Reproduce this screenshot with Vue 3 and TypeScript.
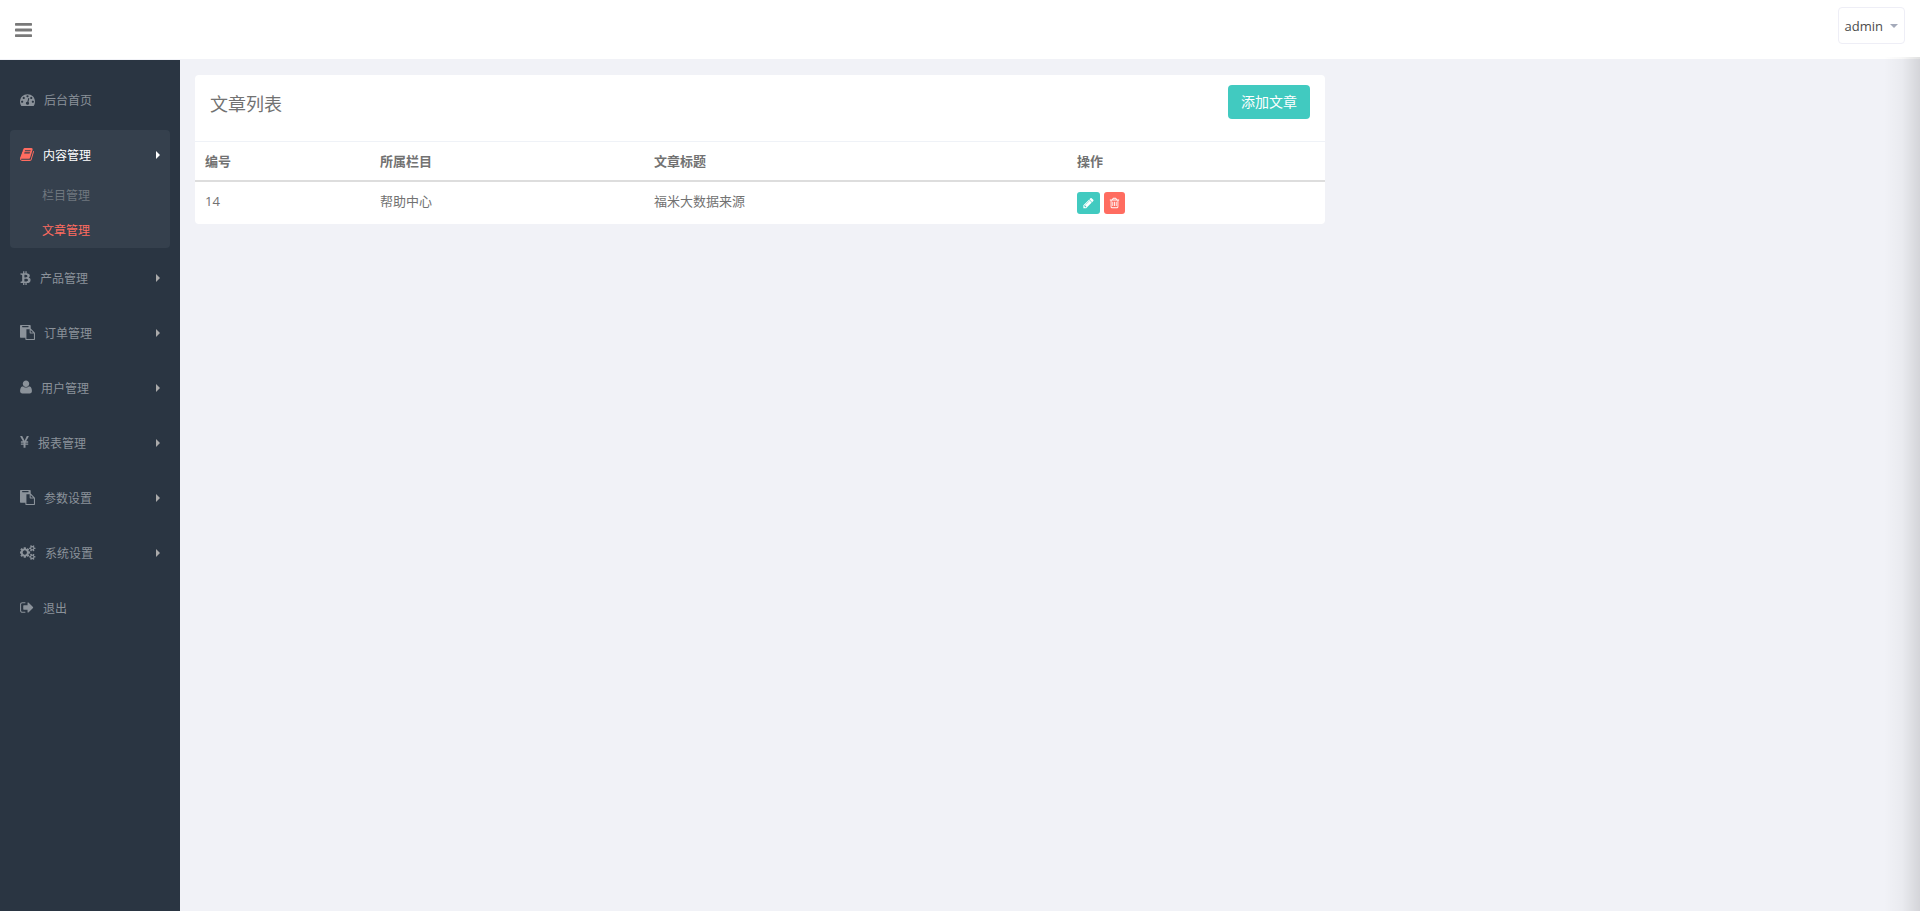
<script setup lang="ts">
import { ref } from 'vue'

interface Icon { box: string; w: number; d: string }
interface MenuItem { label: string; icon: string; children?: string[]; arrow?: boolean }
interface Article { id: number; column: string; title: string }

const icons: Record<string, Icon> = {
  dashboard: { box: '0 0 1792 1792', w: 15, d: 'M384 1152q0-53-37.5-90.5t-90.5-37.5-90.5 37.5-37.5 90.5 37.5 90.5 90.5 37.5 90.5-37.5 37.5-90.5zm192-448q0-53-37.5-90.5t-90.5-37.5-90.5 37.5-37.5 90.5 37.5 90.5 90.5 37.5 90.5-37.5 37.5-90.5zm428 481l101-382q6-26-7.5-48.5t-38.5-29.5-48 6.5-30 39.5l-101 382q-60 5-107 43.5t-63 98.5q-20 77 20 146t117 89 146-20 89-117q16-60-6-117t-72-91zm660-33q0-53-37.5-90.5t-90.5-37.5-90.5 37.5-37.5 90.5 37.5 90.5 90.5 37.5 90.5-37.5 37.5-90.5zm-640-640q0-53-37.5-90.5t-90.5-37.5-90.5 37.5-37.5 90.5 37.5 90.5 90.5 37.5 90.5-37.5 37.5-90.5zm448 192q0-53-37.5-90.5t-90.5-37.5-90.5 37.5-37.5 90.5 37.5 90.5 90.5 37.5 90.5-37.5 37.5-90.5zm320 448q0 261-141 483-19 29-54 29h-1402q-35 0-54-29-141-221-141-483 0-182 71-348t191-286 286-191 348-71 348 71 286 191 191 286 71 348z' },
  book: { box: '64 0 1664 1792', w: 14, d: 'M1703 478q40 57 18 129l-275 906q-19 64-76.5 107.5t-122.5 43.5h-923q-77 0-148.5-53.5t-99.5-131.5q-24-67-2-127 0-4 3-27t4-37q1-8-3-21.5t-3-19.5q2-11 8-21t16.5-23.5 16.5-23.5q23-38 45-91.5t30-91.5q3-10 .5-30t-.5-28q3-11 17-28t17-23q21-36 42-92t25-90q1-9-2.5-32t.5-28q4-13 22-30.5t22-22.5q19-26 42.5-84.5t27.5-96.5q1-8-3-25.5t-2-26.5q2-8 9-18t18-23 17-21q8-12 16.5-30.5t15-35 16-36 19.5-32 26.5-23.5 36-11.5 47.5 5.5l-1 3q38-9 51-9h761q74 0 114 56t18 130l-274 906q-36 119-71.5 153.5t-128.5 34.5h-869q-27 0-38 15-11 16-1 43 24 70 144 70h923q29 0 56-15.5t35-41.5l300-987q7-22 5-57 38 15 59 43zm-1064 2q-4 13 2 22.5t20 9.5h608q13 0 25.5-9.5t16.5-22.5l21-64q4-13-2-22.5t-20-9.5h-608q-13 0-25.5 9.5t-16.5 22.5zm-83 256q-4 13 2 22.5t20 9.5h608q13 0 25.5-9.5t16.5-22.5l21-64q4-13-2-22.5t-20-9.5h-608q-13 0-25.5 9.5t-16.5 22.5z' },
  bitcoin: { box: '256 0 1280 1792', w: 11, d: 'M1408.5 663q18 182-131 258 117 28 175 103t45 214q-7 71-32.5 125t-64.5 89-97 58.5-121.5 34.5-145.5 15v255h-154v-251q-80 0-122-1v252h-154v-255q-18 0-54-.5t-55-.5h-200l31-183h111q50 0 58-51v-402h16q-6-1-16-1v-287q-13-68-89-68h-111v-164l212 1q64 0 97-1v-252h154v247q82-2 122-2v-245h154v252q79 7 140 22.5t113 45 82.5 78 36.5 114.5zm-215 545q0-36-15-64t-37-46-57.5-30.5-65.5-18.5-74-9-69-3-64.5 1-47.5 1v338q8 0 37 .5t48 .5 53-1.5 58.5-4 57-8.5 55.5-14 47.5-21 39.5-30 24.5-40 9.5-51zm-71-476q0-33-12.5-58.5t-30.5-42-48-28-55-16.5-61.5-8-58-2.5-54 1-39.5.5v307q5 0 34.5.5t46.5 0 50-2 55-5.5 51.5-11 48.5-18.5 37-27 27-38.5 9-51z' },
  paste: { box: '0 0 1792 1792', w: 15, d: 'M768 1664h896v-640h-416q-40 0-68-28t-28-68v-416h-384v1152zm256-1440v-64q0-13-9.5-22.5t-22.5-9.5h-704q-13 0-22.5 9.5t-9.5 22.5v64q0 13 9.5 22.5t22.5 9.5h704q13 0 22.5-9.5t9.5-22.5zm256 672h299l-299-299v299zm512 128v672q0 40-28 68t-68 28h-960q-40 0-68-28t-28-68v-160h-544q-40 0-68-28t-28-68v-1344q0-40 28-68t68-28h1088q40 0 68 28t28 68v328q21 13 36 28l408 408q28 28 48 76t20 88z' },
  user: { box: '192 64 1408 1792', w: 12, d: 'M1600 1405q0 120-73 189.500t-194 69.500h-874q-121 0-194-69.500t-73-189.500q0-53 3.500-103.500t14-109 26.500-108.500 43-97.500 62-81 85.500-53.500 111.500-20q9 0 42 21.500t74.500 48 108 48 133.500 21.500 133.500-21.500 108-48 74.500-48 42-21.500q61 0 111.500 20t85.500 53.500 62 81 43 97.500 26.500 108.500 14 109 3.500 103.500zm-320-893q0 159-112.500 271.500t-271.500 112.500-271.500-112.500-112.500-271.500 112.500-271.500 271.500-112.500 271.500 112.500 112.500 271.500z' },
  yen: { box: '382 0 1028 1792', w: 9, d: 'M985.5 1536h-172q-13 0-22.5-9t-9.5-23v-330h-288q-13 0-22.5-9t-9.5-23v-103q0-13 9.5-22.5t22.5-9.5h288v-85h-288q-13 0-22.5-9t-9.5-23v-104q0-13 9.5-22.5t22.5-9.5h214l-321-578q-8-16 0-32 10-16 28-16h194q19 0 29 18l215 425q19 38 56 125 10-24 30.5-68t27.5-61l191-420q8-19 29-19h191q17 0 27 16 9 14 1 31l-313 579h215q13 0 22.5 9.5t9.5 22.5v104q0 14-9.5 23t-22.5 9h-290v85h290q13 0 22.5 9.5t9.5 22.5v103q0 14-9.5 23t-22.5 9h-290v330q0 13-9.500 22.500t-22.500 9.500z' },
  cogs: { box: '0 0 1920 1792', w: 16, d: 'M832 896q0-106-75-181t-181-75-181 75-75 181 75 181 181 75 181-75 75-181zm768 512q0-52-38-90t-90-38-90 38-38 90q0 53 37.5 90.5t90.5 37.5 90.5-37.5 37.5-90.5zm0-1024q0-52-38-90t-90-38-90 38-38 90q0 53 37.5 90.5t90.5 37.5 90.5-37.5 37.5-90.5zm-384 421v185q0 10-7 19.5t-16 10.5l-155 24q-11 35-32 76 34 48 90 115 7 11 7 20 0 12-7 19-23 30-82.5 89.5t-78.500 59.500q-11 0-21-7l-115-90q-37 19-77 31-11 108-23 155-7 24-30 24h-186q-11 0-20-7.500t-10-17.500l-23-153q-34-10-75-31l-118 89q-7 7-20 7-11 0-21-8-144-133-144-160 0-9 7-19 10-14 41-53t47-61q-23-44-35-82l-152-24q-10-1-17-9.500t-7-19.500v-185q0-10 7-19.500t16-10.500l155-24q11-35 32-76-34-48-90-115-7-11-7-20 0-12 7-20 22-30 82-89t79-59q11 0 21 7l115 90q34-18 77-32 11-108 23-154 7-24 30-24h186q11 0 20 7.500t10 17.500l23 153q34 10 75 31l118-89q8-7 20-7 11 0 21 8 144 133 144 160 0 8-7 19-12 16-42 54t-45 60q23 48 34 82l152 23q10 2 17 10.500t7 19.500zm640 533v140q0 16-149 31-12 27-30 52 51 113 51 138 0 4-4 7-122 71-124 71-8 0-46-47t-52-68q-20 2-30 2t-30-2q-14 21-52 68t-46 47q-2 0-124-71-4-3-4-7 0-25 51-138-18-25-30-52-149-15-149-31v-140q0-16 149-31 13-29 30-52-51-113-51-138 0-4 4-7 4-2 35-20t59-34 30-16q8 0 46 46.500t52 67.500q20-2 30-2t30 2q51-71 92-112l6-2q4 0 124 70 4 3 4 7 0 25-51 138 17 23 30 52 149 15 149 31zm0-1024v140q0 16-149 31-12 27-30 52 51 113 51 138 0 4-4 7-122 71-124 71-8 0-46-47t-52-68q-20 2-30 2t-30-2q-14 21-52 68t-46 47q-2 0-124-71-4-3-4-7 0-25 51-138-18-25-30-52-149-15-149-31v-140q0-16 149-31 13-29 30-52-51-113-51-138 0-4 4-7 4-2 35-20t59-34 30-16q8 0 46 46.500t52 67.500q20-2 30-2t30 2q51-71 92-112l6-2q4 0 124 70 4 3 4 7 0 25-51 138 17 23 30 52 149 15 149 31z' },
  signout: { box: '64 0 1664 1792', w: 14, d: 'M704 1440q0 4 1 20t.5 26.5-3 23.5-10 19.5-20.5 6.5h-320q-119 0-203.500-84.500t-84.500-203.500v-704q0-119 84.500-203.500t203.500-84.500h320q13 0 22.500 9.500t9.500 22.500q0 4 1 20t.5 26.500-3 23.500-10 19.500-20.500 6.500h-320q-66 0-113 47t-47 113v704q0 66 47 113t113 47h312l11.500 1 11.500 3 8 5.500 7 9 2 13.500zm928-544q0 26-19 45l-544 544q-19 19-45 19t-45-19-19-45v-288h-448q-26 0-45-19t-19-45v-384q0-26 19-45t45-19h448v-288q0-26 19-45t45-19 45 19l544 544q19 19 19 45z' },
}

const menu: MenuItem[] = [
  { label: '后台首页', icon: 'dashboard' },
  { label: '内容管理', icon: 'book', arrow: true, children: ['栏目管理', '文章管理'] },
  { label: '产品管理', icon: 'bitcoin', arrow: true },
  { label: '订单管理', icon: 'paste', arrow: true },
  { label: '用户管理', icon: 'user', arrow: true },
  { label: '报表管理', icon: 'yen', arrow: true },
  { label: '参数设置', icon: 'paste', arrow: true },
  { label: '系统设置', icon: 'cogs', arrow: true },
  { label: '退出', icon: 'signout' },
]

const opened = ref('内容管理')
const current = ref('文章管理')
const articles: Article[] = [{ id: 14, column: '帮助中心', title: '福米大数据来源' }]
</script>

<template>
  <div class="page">
    <header class="topbar">
      <button class="toggle" type="button" aria-label="切换菜单">
        <svg viewBox="128 0 1536 1792" width="17" height="20"><path d="M1664 1344v128q0 26-19 45t-45 19h-1408q-26 0-45-19t-19-45v-128q0-26 19-45t45-19h1408q26 0 45 19t19 45zm0-512v128q0 26-19 45t-45 19h-1408q-26 0-45-19t-19-45v-128q0-26 19-45t45-19h1408q26 0 45 19t19 45zm0-512v128q0 26-19 45t-45 19h-1408q-26 0-45-19t-19-45v-128q0-26 19-45t45-19h1408q26 0 45 19t19 45z" /></svg>
      </button>
      <button class="account" type="button">admin<span class="caret"></span></button>
    </header>
    <div class="body">
      <nav class="sidebar">
        <ul class="menu">
          <li v-for="item in menu" :key="item.label" :class="{ open: item.label === opened }">
            <a class="link" href="#">
              <svg :viewBox="icons[item.icon].box" :width="icons[item.icon].w" height="15"><path :d="icons[item.icon].d" /></svg>
              <span>{{ item.label }}</span>
              <i v-if="item.arrow" class="arrow"></i>
            </a>
            <ul v-if="item.children" class="sub">
              <li v-for="child in item.children" :key="child">
                <a href="#" :class="{ current: child === current }">{{ child }}</a>
              </li>
            </ul>
          </li>
        </ul>
      </nav>
      <main class="content">
        <section class="panel">
          <div class="panel-head">
            <h1>文章列表</h1>
            <button class="add" type="button">添加文章</button>
          </div>
          <table>
            <thead>
              <tr>
                <th class="c-id">编号</th>
                <th class="c-col">所属栏目</th>
                <th class="c-title">文章标题</th>
                <th>操作</th>
              </tr>
            </thead>
            <tbody>
              <tr v-for="a in articles" :key="a.id">
                <td>{{ a.id }}</td>
                <td>{{ a.column }}</td>
                <td>{{ a.title }}</td>
                <td>
                  <div class="actions">
                    <button class="edit" type="button" aria-label="编辑">
                      <svg viewBox="128 0 1536 1792" width="11" height="12"><path d="M491 1536l91-91-235-235-91 91v107h128v128h107zm523-928q0-22-22-22-10 0-17 7l-542 542q-7 7-7 17 0 22 22 22 10 0 17-7l542-542q7-7 7-17zm-54-192l416 416-832 832h-416v-416zm683 96q0 53-37 90l-166 166-416-416 166-165q36-38 90-38 53 0 91 38l235 234q37 39 37 91z" /></svg>
                    </button>
                    <button class="remove" type="button" aria-label="删除">
                      <svg viewBox="192 0 1408 1792" width="11" height="12"><path d="M704 736v576q0 14-9 23t-23 9h-64q-14 0-23-9t-9-23v-576q0-14 9-23t23-9h64q14 0 23 9t9 23zm256 0v576q0 14-9 23t-23 9h-64q-14 0-23-9t-9-23v-576q0-14 9-23t23-9h64q14 0 23 9t9 23zm256 0v576q0 14-9 23t-23 9h-64q-14 0-23-9t-9-23v-576q0-14 9-23t23-9h64q14 0 23 9t9 23zm128 724v-948h-896v948q0 22 7 40.500t14.500 27 10.500 8.500h832q3 0 10.500-8.500t14.500-27 7-40.500zm-672-1076h448l-48-117q-7-9-17-11h-317q-10 2-17 11zm928 32v64q0 14-9 23t-23 9h-96v948q0 83-47 143.500t-113 60.500h-832q-66 0-113-58.500t-47-141.500v-952h-96q-14 0-23-9t-9-23v-64q0-14 9-23t23-9h309l70-167q15-37 54-63t79-26h320q40 0 79 26t54 63l70 167h309q14 0 23 9t9 23z" /></svg>
                    </button>
                  </div>
                </td>
              </tr>
            </tbody>
          </table>
        </section>
      </main>
    </div>
  </div>
</template>

<style>
body {
  background: #f1f2f7;
}
</style>

<style scoped>
.page {
  display: flex;
  flex-direction: column;
  min-height: 100vh;
  font-family: "Open Sans", "Noto Sans CJK SC", sans-serif;
  font-size: 13px;
  line-height: 18px;
  color: #727272;
}
ul {
  list-style: none;
  margin: 0;
  padding: 0;
}
a {
  text-decoration: none;
  color: inherit;
}
button {
  font: inherit;
  border: 0;
  cursor: pointer;
}
svg {
  display: block;
  flex: none;
  fill: currentColor;
}
.topbar {
  display: flex;
  justify-content: space-between;
  align-items: flex-start;
  box-sizing: border-box;
  height: 60px;
  padding: 7px 15px;
  background: #fff;
  border-bottom: 1px solid #f1f2f7;
}
.toggle {
  margin-top: 13px;
  padding: 0;
  background: none;
  color: #797979;
}
.account {
  display: flex;
  align-items: center;
  gap: 7px;
  box-sizing: border-box;
  height: 37px;
  padding: 0 6px;
  background: #fff;
  border: 1px solid #eeeef6;
  border-radius: 4px;
  color: #4c4c4c;
}
.caret {
  border: 4px solid transparent;
  border-top-color: #a4aaba;
  border-bottom: 0;
}
.body {
  flex: 1;
  display: flex;
}
.sidebar {
  flex: none;
  box-sizing: border-box;
  width: 180px;
  padding: 15px 10px;
  background: #2a3542;
  color: #8b929a;
  font-size: 12px;
}
.menu {
  display: flex;
  flex-direction: column;
  gap: 5px;
}
.link {
  display: flex;
  align-items: center;
  gap: 9px;
  height: 50px;
  padding: 0 10px;
}
.link svg {
  margin-bottom: 2px;
}
.link span {
  padding-top: 2px;
}
.arrow {
  margin-left: auto;
  border: 4px solid transparent;
  border-left-color: #aaa;
  border-right: 0;
}
.open {
  background: #35404d;
  border-radius: 4px;
}
.open .link {
  color: #fff;
}
.open .link svg {
  color: #ff6c60;
}
.open .arrow {
  border-left-color: #fff;
}
.sub {
  margin-top: -2px;
  color: #6f777f;
}
.sub a {
  display: block;
  line-height: 35px;
  padding-left: 32px;
}
.sub .current {
  color: #ff6c60;
}
.content {
  position: relative;
  flex: 1;
  padding-top: 15px;
}
.content::after {
  content: "";
  position: absolute;
  top: -3px;
  right: 0;
  bottom: 0;
  width: 36px;
  background: linear-gradient(to right, rgba(0, 0, 0, 0), rgba(0, 0, 0, 0.03) 50%, rgba(0, 0, 0, 0.12));
  pointer-events: none;
}
.panel {
  width: calc(100% * 2 / 3 - 30px);
  margin-left: 15px;
  background: #fff;
  border-radius: 4px;
}
.panel-head {
  display: flex;
  justify-content: space-between;
  align-items: flex-start;
  padding: 10px 15px 18px;
  border-bottom: 1px solid #eff2f7;
}
h1 {
  margin: 0;
  font-size: 18px;
  font-weight: 400;
  line-height: 38px;
}
.add {
  padding: 7px 13px;
  background: #41cac0;
  border-radius: 4px;
  color: #fff;
  font-size: 14px;
  line-height: 20px;
}
table {
  width: 100%;
  table-layout: fixed;
  border-collapse: separate;
  border-spacing: 0;
}
th,
td {
  padding: 10px;
  text-align: left;
  vertical-align: top;
}
th {
  border-bottom: 2px solid #ddd;
  font-weight: 600;
}
.c-id {
  width: 155px;
}
.c-col {
  width: 254px;
}
.c-title {
  width: 403px;
}
.actions {
  display: flex;
  gap: 4px;
}
.edit,
.remove {
  padding: 5px 6px;
  border-radius: 3px;
  color: #fff;
}
.edit {
  background: #41cac0;
}
.remove {
  padding: 5px;
  background: #ff6c60;
}
</style>
